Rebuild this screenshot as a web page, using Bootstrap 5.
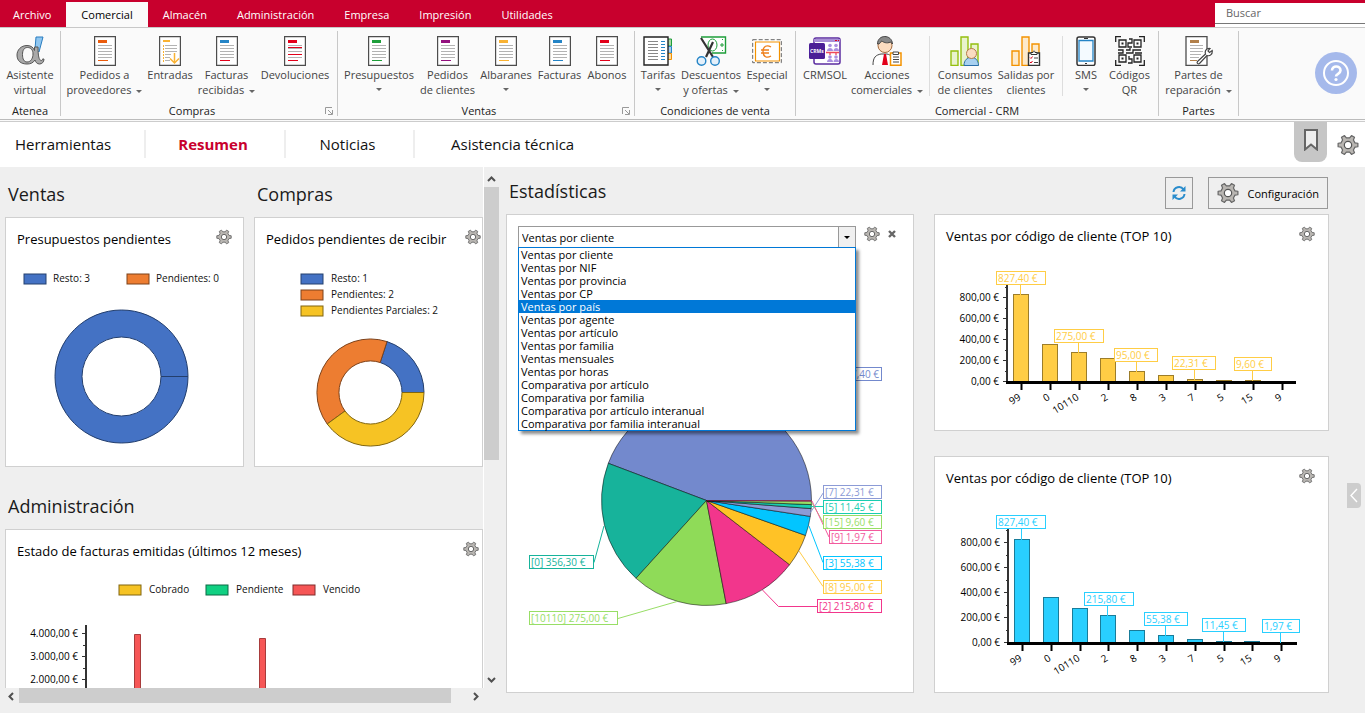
<!DOCTYPE html>
<html lang="es">
<head>
<meta charset="utf-8">
<meta name="viewport" content="width=device-width, initial-scale=1">
<title>Comercial - Resumen</title>
<link href="https://cdn.jsdelivr.net/npm/bootstrap@5.3.0/dist/css/bootstrap.min.css" rel="stylesheet">
<style>
:root{--brand:#c8002d;--rule:#c8c8c8;--ink:#444}
body{font-family:"Open Sans","Noto Sans",sans-serif;font-size:11px;line-height:15px;color:#000;background:#efefef;height:100vh;overflow:hidden}
svg{display:block}
.topbar{background:var(--brand);height:27px}
.topbar .nav-link{color:#fff;padding:0 15px;font-size:11px;line-height:25px;height:25px;border:0;border-radius:0}
.topbar .nav-link:first-child{padding-left:13px}
.topbar .nav-link.active{background:#fafafa;color:#000}
.searchbox{width:150px;margin-top:3px;background:#fff;height:24px}
.searchbox input{width:100%;height:21px;border:0;border-bottom:1px solid #777;padding:0 11px 2px;font-size:11px;border-radius:0;outline:0}
.searchbox input::placeholder{color:#666}
.ribbon{background:#fafafa;border-top:1px solid var(--rule);border-bottom:1px solid #bbb;height:93px}
.ribbon-shade{height:2px;border-bottom:1px solid #ccc;background:#fafafa}
.rgroup{position:relative;border-right:1px solid var(--rule);margin:3px 0;padding-top:5px}
.rgrid{display:grid;height:67px}
.g-atenea{grid-template-columns:60px}
.g-compras{grid-template-columns:87px 44px 69px 68px 8px}
.g-ventas{grid-template-columns:82px 55px 62px 45px 50px 2px}
.g-cond{grid-template-columns:46px 60px 52px 2px}
.g-crm{grid-template-columns:58px 66px 18px 54px 68px 5px 42px 45px 6px}
.g-partes{grid-template-columns:79px}
.rbtn{border:0;background:none;padding:0;color:var(--ink);white-space:nowrap;display:flex;flex-direction:column;align-items:center;overflow:visible;line-height:15px}
.rbtn svg.ico{margin-bottom:1px;flex:none}
.rbtn .caret,.caret{display:inline-block;border:3px solid transparent;border-top-color:#666;border-bottom:0;vertical-align:middle}
.rbtn .caret.ms-cr{margin-left:5px}
.rbtn .lone{margin-top:6px}
.rsep{width:1px;background:#ddd;justify-self:center;height:60px}
.rcap{text-align:center;color:#222;height:15px}
.rcap.with-launcher{padding-right:14px}
.launcher{position:absolute;right:4px;bottom:1px}
.helpbtn{width:42px;height:42px;background:#a5b9eb;border:0;padding:0;border-radius:50%}
.subnav{background:#fff;height:45px}
.subnav a{font-size:15px;color:#111;text-decoration:none;text-align:center;line-height:28px;border-right:2px solid #eee;width:140px;padding-right:4px}
.subnav a.first{width:146px;text-align:left;padding-left:15px}
.subnav a.third{width:129px}
.subnav a.last{border:0;width:auto;padding-left:36px}
.subnav a.active{color:var(--brand);font-weight:700}
.bookmark{width:33px;height:40px;background:#c6c6c6;border:0;border-radius:0 0 8px 8px;padding:0 0 4px}
.iconbtn{border:0;background:none;padding:0;display:block}
.iconbtn.settings{margin:12px 6px 0 10px}
.board{display:grid;grid-template-columns:506fr 408fr 415fr 36px;height:calc(100vh - 167px)}
.pane{padding-right:7px;padding-bottom:9px;min-width:0;min-height:0}
.viewport{overflow:hidden;min-width:0}
.viewport-in{padding-left:5px;border-right:1px solid #fff}
.duo{display:grid;grid-template-columns:239fr 229fr;column-gap:10px}
.sect{font-size:18px;line-height:24px;font-weight:400;margin:0;padding:15px 3px 11px;color:#1a1a1a}
.sect.compact{padding-top:12px}
.sect.next{padding-top:27px}
.panel{background:#fff;border:1px solid #d0d0d0}
.panel-h{padding:11px 11px 0;height:38px;display:flex;align-items:flex-start;justify-content:space-between}
.panel-h h3{font-size:13px;line-height:20px;font-weight:500;margin:0;white-space:nowrap}
.panel-h.flush{padding-right:1px}
.panel-h.near{padding-right:3px}
.top10 .panel-h{padding-right:13px}
.panel-h.combo-row{height:34px;justify-content:flex-start;gap:8px}
.panel svg.plot{width:100%;height:auto}
.vbar{width:15px;background:#efefef}
.vbar i,.hbar i{display:block;background:#cdcdcd}
.vbar i{height:273px}
.hbar{height:16px;margin:0 15px 0 3px}
.vbar button,.hbar button{border:0;background:none;padding:0;width:16px;height:16px;display:flex;align-items:center;justify-content:center}
.vbar button{width:15px}
.hbar i{flex:0 1 432px;height:15px}
.tools{display:flex;justify-content:flex-end;gap:15px;padding:10px 1px 0 0;height:47px}
.toolbtn{border:1px solid #999;background:#efefef;height:32px;padding:0;border-radius:0;font-size:11px;color:#000}
.toolbtn.square{width:28px}
.top10 + .top10{margin-top:25px}
.combo{position:relative;width:338px}
.combo select{appearance:none;width:100%;height:22px;border:1px solid #999;border-radius:0;padding:0 3px;background:#fff;font-size:11px;color:#000;display:block}
.combo .drop{position:absolute;right:0;top:0;width:18px;height:22px;border:1px solid #999;background:#f0f0f0;display:flex;align-items:center;justify-content:center;pointer-events:none}
.combo .drop .caret{border-top-color:#000}
.combo .dropdown-menu{top:21px;left:0;width:100%;padding:0;margin:0;border:1px solid #0078d7;border-radius:0;box-shadow:3px 3px 3px rgba(0,0,0,.45);font-size:11px}
.combo .dropdown-item{padding:0 2px;line-height:13px;color:#000}
.combo .dropdown-item.active{background:#0078d7;color:#fff}
.plot text{font-size:10px}
.plot .lg{fill:#111}
.handle{width:14px;height:25px;border:0;background:#cdcdcd;border-radius:0 4px 4px 0;padding:0;margin:316px 0 0 18px}
</style>
</head>
<body class="d-flex flex-column">
<svg width="0" height="0" class="position-absolute" aria-hidden="true">
<symbol id="gear" viewBox="0 0 24 24"><path d="M19.6 9.7 22.8 10.1V13.9L19.6 14.3 17.9 17.5 19.1 20.4 15.8 22.3 13.8 19.8H10.2L8.2 22.3 4.9 20.4 6.1 17.5 4.4 14.3 1.2 13.9V10.1L4.4 9.7 6.1 6.5 4.9 3.6 8.2 1.7 10.2 4.2H13.8L15.8 1.7 19.1 3.6 17.9 6.5Z" fill="#b9b6b2" stroke="#666" stroke-width="1.3" stroke-linejoin="round"/><circle cx="12" cy="12" r="4" fill="#fff" stroke="#555" stroke-width="1.3"/></symbol>
<symbol id="doc" viewBox="0 0 22 30"><path d="M.5.5h21v29H.5z" fill="#fff" stroke="#4d4d4d" stroke-width="1.4"/><path d="M4 4h9v3H4zM4 24h10v1H4z" fill="currentColor"/><path d="M4 9.5h14M4 12.5h14M4 15.5h14M4 18.5h14M4 21.5h14" stroke="#b3b3b3"/></symbol>
</svg>

<header>
<div class="topbar d-flex justify-content-between">
 <nav class="nav align-items-end flex-nowrap">
  <a class="nav-link" href="#">Archivo</a><a class="nav-link active" href="#">Comercial</a><a class="nav-link" href="#">Almacén</a><a class="nav-link" href="#">Administración</a><a class="nav-link" href="#">Empresa</a><a class="nav-link" href="#">Impresión</a><a class="nav-link" href="#">Utilidades</a>
 </nav>
 <div class="searchbox"><input type="text" placeholder="Buscar" aria-label="Buscar"></div>
</div>

<div class="ribbon d-flex">
 <div class="rgroup"><div class="rgrid g-atenea">
  <button class="rbtn"><svg class="ico" width="30" height="30" viewBox="0 0 30 30"><path d="M21 1h7l-4 15-4-3z" fill="#8fc6f0" stroke="#2a7dc0"/><path d="M19.500 11h3.500c0 9 1 13 3 13.500 1 .2 1.500-.5 1.500-1.500h1.500c0 3-2 5-4.500 5-2.500 0-4-2-4.500-4-2 3-4.500 4-8 4-6 0-10-3-10-9 0-5 4-9.500 10-9.500 4 0 6.500 2 7.500 5z" fill="#a9a9a9" stroke="#555"/><path d="M12.500 11.500c-3.500 0-5 3-5 7 0 4.500 1.500 7.500 4.500 7.500 4 0 6-4 6-8 0-4-2-6.500-5.500-6.500z" fill="#fafafa" stroke="#555"/></svg>Asistente<br>virtual</button>
 </div><div class="rcap">Atenea</div></div>

 <div class="rgroup"><div class="rgrid g-compras">
  <button class="rbtn"><svg class="ico" width="22" height="30" color="#ea5b0c"><use href="#doc"/></svg>Pedidos a<span>proveedores<i class="caret ms-cr"></i></span></button>
  <button class="rbtn"><svg class="ico" width="22" height="30" viewBox="0 0 22 30"><path d="M.5.5h21v29H.5z" fill="#fff" stroke="#4d4d4d" stroke-width="1.400"/><path d="M4 4h7v2H4z" fill="#f9b233"/><path d="M6 9.500h12M6 12.500h12M6 15.500h12M6 18.500h6M6 21.500h5M6 24.500h5" stroke="#b3b3b3"/><path d="M4.500 9v17" stroke="#f9b233" stroke-dasharray="2 1"/><path d="M15.500 17v10M11 22.500l4.500 4.500 4.500-4.500" fill="none" stroke="#f9b233" stroke-width="1.500"/></svg>Entradas</button>
  <button class="rbtn"><svg class="ico" width="22" height="30" viewBox="0 0 22 30"><g color="#2484c6"><use href="#doc"/></g><path d="M4 24h10v1H4z" fill="#e2001a"/></svg>Facturas<span>recibidas<i class="caret ms-cr"></i></span></button>
  <button class="rbtn"><svg class="ico" width="22" height="30" viewBox="0 0 22 30"><g color="#e2001a"><use href="#doc"/></g><path d="M4 11.500h14M4 18.500h14" stroke="#e2001a"/></svg>Devoluciones</button>
 </div><div class="rcap with-launcher">Compras</div><svg class="launcher" width="8" height="8" viewBox="0 0 8 8"><path d="M.5 7V.5H7M3 3l4 4M7.500 3v4.500H3" fill="none" stroke="#999"/></svg></div>

 <div class="rgroup"><div class="rgrid g-ventas">
  <button class="rbtn"><svg class="ico" width="22" height="30" color="#1e9e3a"><use href="#doc"/></svg>Presupuestos<i class="caret lone"></i></button>
  <button class="rbtn"><svg class="ico" width="22" height="30" color="#93117e"><use href="#doc"/></svg>Pedidos<br>de clientes</button>
  <button class="rbtn"><svg class="ico" width="22" height="30" color="#f9b233"><use href="#doc"/></svg>Albaranes<i class="caret lone"></i></button>
  <button class="rbtn"><svg class="ico" width="22" height="30" color="#2484c6"><use href="#doc"/></svg>Facturas</button>
  <button class="rbtn"><svg class="ico" width="22" height="30" color="#e2001a"><use href="#doc"/></svg>Abonos</button>
 </div><div class="rcap with-launcher">Ventas</div><svg class="launcher" width="8" height="8" viewBox="0 0 8 8"><path d="M.5 7V.5H7M3 3l4 4M7.500 3v4.500H3" fill="none" stroke="#999"/></svg></div>

 <div class="rgroup"><div class="rgrid g-cond">
  <button class="rbtn"><svg class="ico" width="30" height="30" viewBox="0 0 30 30"><path d="M24 3h4.500v7H24z" fill="#a8d5a2" stroke="#1e9e3a"/><path d="M24 10.500h4.500v6.500H24z" fill="#a9cdec" stroke="#2484c6"/><path d="M24 17.500h4.500v6H24z" fill="#fbd9a0" stroke="#f39200"/><path d="M1 1h24v28H1z" fill="#fff" stroke="#222" stroke-width="1.400"/><path d="M5 5.500h10M5 8.500h10M5 11.500h10M5 14.500h10M5 17.500h10M5 20.500h10M5 23.500h10" stroke="#888"/><path d="M18 5.500h4M18 8.500h4M18 11.500h4M18 14.500h4M18 17.500h4M18 20.500h4M18 23.500h4" stroke="#2484c6"/></svg>Tarifas<i class="caret lone"></i></button>
  <button class="rbtn"><svg class="ico" width="32" height="30" viewBox="0 0 32 30"><path d="M6 1h24.500v16H17" fill="#fff" stroke="#1e9e3a" stroke-width="1.400"/><ellipse cx="17.500" cy="9" rx="4.500" ry="6" fill="none" stroke="#1e9e3a"/><path d="M25 9h4M27 7v4M27 3.500h1M27 14.500h1" stroke="#1e9e3a"/><path d="M6 2l12 19M18 6L11 21" stroke="#333" stroke-width="2.200"/><circle cx="6.500" cy="25" r="4.300" fill="#e4f0fa" stroke="#2484c6" stroke-width="1.400"/><circle cx="20" cy="25" r="4.300" fill="#e4f0fa" stroke="#2484c6" stroke-width="1.400"/></svg>Descuentos<span>y ofertas<i class="caret ms-cr"></i></span></button>
  <button class="rbtn"><svg class="ico" width="30" height="30" viewBox="0 0 30 30"><path d="M.7 3.700h28.600v23H.7z" fill="#fff" stroke="#666" stroke-dasharray="4 2"/><path d="M3.500 6h24v19h-24z" fill="#fff" stroke="#f39200" stroke-width="1.200"/><path d="M19 11c-4-2.500-8-1-8 4.500s4 7 8 4.500M9 14h8M9 17h8" fill="none" stroke="#ee7f1a" stroke-width="1.300"/></svg>Especial<i class="caret lone"></i></button>
 </div><div class="rcap">Condiciones de venta</div></div>

 <div class="rgroup"><div class="rgrid g-crm">
  <button class="rbtn"><svg class="ico" width="34" height="30" viewBox="0 0 34 30"><rect x="6" y="2" width="26" height="26" rx="2" fill="#fff" stroke="#5b2da0" stroke-width="1.500"/><path d="M6 3h26v3H6z" fill="#a98fd6"/><path d="M27 4.500h2M30 4.500h1" stroke="#e2001a"/><g fill="#a98fe0"><circle cx="22" cy="9.500" r="1.800"/><path d="M19 15c0-4 6-4 6 0z"/><circle cx="28" cy="9.500" r="1.800"/><path d="M25.500 15c0-4 5.500-4 5.500 0z"/><circle cx="22" cy="21" r="1.800"/><path d="M19 26c0-4 6-4 6 0z"/><circle cx="28" cy="21" r="1.800"/><path d="M25.500 26c0-4 5.500-4 5.500 0z"/></g><path d="M18 16.500h13M22 16v3M28 16v3" stroke="#ee4a5a" stroke-width="1.300"/><rect x="1" y="7" width="16" height="16" rx="1.500" fill="#4b1e96"/><text x="2" y="17" font-size="5" font-weight="700" fill="#fff">CRMs</text></svg>CRMSOL</button>
  <button class="rbtn"><svg class="ico" width="30" height="30" viewBox="0 0 30 30"><path d="M1 29c0-8 3-10 8-11h6c4 1 7 3 8 11" fill="#fff" stroke="#444"/><path d="M12 18h2l2 11h-6z" fill="#e2001a"/><circle cx="13" cy="9.500" r="7" fill="#fbdcc0" stroke="#a56a3c"/><path d="M5.500 8C5.500-2 20-2 20.500 8l-2-2c-4 2-7 0-9-1-1 2-2 3-4 3z" fill="#888" stroke="#444"/><path d="M18.500 17h10.500v12.300h-10.500z" fill="#fff" stroke="#f39200" stroke-width="1.500"/><path d="M21 16h5.500v2.500H21zM21 21h6M21 23.500h6M21 26h6" fill="#fff" stroke="#444"/></svg>Acciones<span>comerciales<i class="caret ms-cr"></i></span></button>
  <span class="rsep"></span>
  <button class="rbtn"><svg class="ico" width="30" height="30" viewBox="0 0 30 30"><path d="M1 15h7v14.500H1zM11 1h7v28.500h-7zM21 8h7v21h-7z" fill="#e9f3cd" stroke="#94bf0e" stroke-width="1.400"/><path d="M14 29.500c0-11 14.500-11 14.500 0z" fill="#a7d0f0" stroke="#2a6ea8"/><circle cx="21.500" cy="17.500" r="5" fill="#fbdcc0" stroke="#b5784a"/></svg>Consumos<br>de clientes</button>
  <button class="rbtn"><svg class="ico" width="30" height="30" viewBox="0 0 30 30"><path d="M1 15h7v14.500H1zM11 1h7v28.500h-7zM21 8h7v21h-7z" fill="#fdeacb" stroke="#f39200" stroke-width="1.400"/><path d="M17.500 17h11v12.500h-11z" fill="#fff" stroke="#333" stroke-width="1.400"/><path d="M20 18.500v-2h2c0-2 2-2 2 0h2v2z" fill="#fff" stroke="#333"/><path d="M19 21.500l1 1 1.500-2M19 26l1 1 1.500-2" stroke="#e2001a" fill="none"/><path d="M23 22h4M23 26.500h4" stroke="#444"/></svg>Salidas por<br>clientes</button>
  <span class="rsep"></span>
  <button class="rbtn"><svg class="ico" width="20" height="30" viewBox="0 0 20 30"><rect x="1" y="1" width="18" height="28.500" rx="2" fill="#fff" stroke="#333" stroke-width="1.500"/><path d="M3 4.500h14v20.500H3z" fill="#f4faff" stroke="#2484c6" stroke-width="1.300"/><path d="M8 2.500h4M9 27.500h2" stroke="#333"/></svg>SMS<i class="caret lone"></i></button>
  <button class="rbtn"><svg class="ico" width="30" height="30" viewBox="0 0 30 30"><g fill="none" stroke="#222" stroke-width="1.300"><path d="M.7 6V.7H6M24 .7h5.300V6M29.300 24v5.300H24M6 29.300H.7V24M4 4h7v7H4zM19 4h7v7h-7zM4 19h7v7H4zM19 19h7v7h-7z"/><path d="M14 3h3v4h-4v4h4M3 14h5v3H3M11 14h4v-2M11 17h7v-3h8M20 17h7M14 20v3h3v4h-4M13 27h4"/></g><path d="M6.500 6.500h2v2h-2zM21.500 6.500h2v2h-2zM6.500 21.500h2v2h-2zM21.500 21.500h2v2h-2z" fill="#222"/></svg>Códigos<br>QR</button>
 </div><div class="rcap">Comercial - CRM</div></div>

 <div class="rgroup"><div class="rgrid g-partes">
  <button class="rbtn"><svg class="ico" width="28" height="30" viewBox="0 0 28 30"><g color="#b17f4a"><path d="M1 .7h21v28.600H1z" fill="#fff" stroke="#4d4d4d" stroke-width="1.300"/><path d="M5 4h9v3H5zM5 24h7v1H5z" fill="currentColor"/></g><path d="M5 9.500h13M5 12.500h13M5 15.500h13M5 18.500h11M5 21.500h9" stroke="#b3b3b3"/><path d="M12.500 25.500l8-7.500c-1-3 1-6 4.500-5.500l-2 2.500 1.500 1.500 2.700-2c.5 3.500-2 6-5.200 5l-7.500 8c-1.500 1-3-.5-2-2z" fill="#fff" stroke="#444" stroke-width="1.200"/></svg>Partes de<span>reparación<i class="caret ms-cr"></i></span></button>
 </div><div class="rcap">Partes</div></div>
 <div class="ms-auto pe-2 d-flex align-items-start pt-4"><button class="helpbtn" aria-label="Ayuda"><svg width="42" height="42" viewBox="0 0 42 42"><circle cx="21" cy="21" r="12" fill="none" stroke="#fff" stroke-width="2"/><path d="M17 18.500c0-5.500 8.500-5 8.500 0 0 3.500-4.500 3-4.500 6" fill="none" stroke="#fff" stroke-width="2.600"/><circle cx="21" cy="27.500" r="1.600" fill="#fff"/></svg></button></div>
</div>
<div class="ribbon-shade"></div>

<div class="subnav d-flex align-items-start">
 <nav class="d-flex pt-2"><a class="first" href="#">Herramientas</a><a class="active" href="#">Resumen</a><a class="third" href="#">Noticias</a><a class="last" href="#">Asistencia técnica</a></nav>
 <button class="bookmark ms-auto" aria-label="Marcador"><svg class="mx-auto" width="14" height="22" viewBox="0 0 14 22"><path d="M1 1h12v19.500l-6-5-6 5z" fill="#eee" stroke="#666" stroke-width="2"/></svg></button>
 <button class="iconbtn settings" aria-label="Ajustes"><svg width="22" height="22"><use href="#gear"/></svg></button>
</div>
</header>

<main class="board">
 <section class="pane d-flex flex-column">
  <div class="d-flex flex-grow-1 overflow-hidden">
   <div class="viewport flex-grow-1"><div class="viewport-in">
    <div class="duo">
     <div>
      <h2 class="sect">Ventas</h2>
      <div class="panel"><div class="panel-h"><h3>Presupuestos pendientes</h3><button class="iconbtn" aria-label="Configurar"><svg width="16" height="16"><use href="#gear"/></svg></button></div>
       <svg class="plot" viewBox="6 256 237 210">
        <rect x="24" y="274" width="22" height="10" fill="#4472c4" stroke="#24406f"/><text class="lg" x="53" y="282">Resto: 3</text>
        <rect x="127" y="274" width="22" height="10" fill="#ed7d31" stroke="#7d421a"/><text class="lg" x="156" y="282">Pendientes: 0</text>
        <circle cx="121.500" cy="376.500" r="53" fill="none" stroke="#4472c4" stroke-width="27"/>
        <g fill="none" stroke="#243f6d"><circle cx="121.500" cy="376.500" r="66.500"/><circle cx="121.500" cy="376.500" r="39.500"/><path d="M161 376.500h27"/></g>
       </svg></div>
     </div>
     <div>
      <h2 class="sect">Compras</h2>
      <div class="panel"><div class="panel-h flush"><h3>Pedidos pendientes de recibir</h3><button class="iconbtn" aria-label="Configurar"><svg width="16" height="16"><use href="#gear"/></svg></button></div>
       <svg class="plot" viewBox="255 256 227 210">
        <rect x="301" y="274" width="22" height="10" fill="#4472c4" stroke="#24406f"/><text class="lg" x="331" y="282">Resto: 1</text>
        <rect x="301" y="290" width="22" height="10" fill="#ed7d31" stroke="#7d421a"/><text class="lg" x="331" y="298">Pendientes: 2</text>
        <rect x="301" y="306" width="22" height="10" fill="#f6c324" stroke="#80650f"/><text class="lg" x="331" y="314">Pendientes Parciales: 2</text>
        <path d="M424 392.500A53.500 53.500 0 0 0 387 341.600L380.200 362.500A31.500 31.500 0 0 1 402 392.500Z" fill="#4472c4" stroke="#243f6d"/>
        <path d="M387 341.600A53.500 53.500 0 0 0 327.200 424L345 411A31.500 31.500 0 0 1 380.200 362.500Z" fill="#ed7d31" stroke="#7d421a"/>
        <path d="M424 392.500A53.500 53.500 0 0 1 327.200 424L345 411A31.500 31.500 0 0 0 402 392.500Z" fill="#f6c324" stroke="#80650f"/>
       </svg></div>
     </div>
    </div>
    <h2 class="sect next">Administración</h2>
    <div class="panel border-bottom-0"><div class="panel-h near"><h3>Estado de facturas emitidas (últimos 12 meses)</h3><button class="iconbtn" aria-label="Configurar"><svg width="16" height="16"><use href="#gear"/></svg></button></div>
     <svg class="plot" viewBox="6 568 476 121">
      <rect x="119" y="585" width="22" height="10" fill="#f6c324" stroke="#80650f"/><text class="lg" x="149" y="593">Cobrado</text>
      <rect x="206" y="585" width="22" height="10" fill="#10d082" stroke="#0b6b44"/><text class="lg" x="236" y="593">Pendiente</text>
      <rect x="293" y="585" width="22" height="10" fill="#f65656" stroke="#802d2d"/><text class="lg" x="323" y="593">Vencido</text>
      <g text-anchor="end"><text x="78" y="637">4.000,00 €</text><text x="78" y="660">3.000,00 €</text><text x="78" y="683">2.000,00 €</text></g>
      <path d="M86 625v64" stroke="#333" stroke-width="2"/><path d="M82 633.500h4M83 645.500h3M82 656.500h4M83 668.500h3M82 679.500h4" stroke="#333"/>
      <path d="M134.500 700v-65.500h6v65.500zM259.500 700v-61.500h6v61.500z" fill="#f65656" stroke="#a83b3b"/>
     </svg></div>
   </div></div>
   <div class="vbar d-flex flex-column pt-1"><button aria-label="Subir"><svg width="9" height="6" viewBox="0 0 9 6"><path d="M1 5l3.500-3.500L8 5" fill="none" stroke="#505050" stroke-width="2"/></svg></button><i></i><button class="mt-auto" aria-label="Bajar"><svg width="9" height="6" viewBox="0 0 9 6"><path d="M1 1l3.500 3.500L8 1" fill="none" stroke="#505050" stroke-width="2"/></svg></button></div>
  </div>
  <div class="hbar d-flex"><button aria-label="Izquierda"><svg width="6" height="9" viewBox="0 0 6 9"><path d="M5 1L1.500 4.500 5 8" fill="none" stroke="#505050" stroke-width="2"/></svg></button><i></i><button class="ms-auto" aria-label="Derecha"><svg width="6" height="9" viewBox="0 0 6 9"><path d="M1 1l3.500 3.500L1 8" fill="none" stroke="#505050" stroke-width="2"/></svg></button></div>
 </section>

 <section>
  <h2 class="sect compact">Estadísticas</h2>
  <div class="panel">
   <div class="panel-h combo-row"><div class="combo">
     <select aria-label="Estadística"><option>Ventas por cliente</option></select><span class="drop"><i class="caret"></i></span>
     <div class="dropdown-menu show">
      <a class="dropdown-item" href="#">Ventas por cliente</a><a class="dropdown-item" href="#">Ventas por NIF</a><a class="dropdown-item" href="#">Ventas por provincia</a><a class="dropdown-item" href="#">Ventas por CP</a><a class="dropdown-item active" href="#">Ventas por país</a><a class="dropdown-item" href="#">Ventas por agente</a><a class="dropdown-item" href="#">Ventas por artículo</a><a class="dropdown-item" href="#">Ventas por familia</a><a class="dropdown-item" href="#">Ventas mensuales</a><a class="dropdown-item" href="#">Ventas por horas</a><a class="dropdown-item" href="#">Comparativa por artículo</a><a class="dropdown-item" href="#">Comparativa por familia</a><a class="dropdown-item" href="#">Comparativa por artículo interanual</a><a class="dropdown-item" href="#">Comparativa por familia interanual</a>
     </div></div>
    <button class="iconbtn" aria-label="Configurar"><svg width="16" height="16"><use href="#gear"/></svg></button>
    <button class="iconbtn py-1" aria-label="Cerrar"><svg width="8" height="8" viewBox="0 0 8 8"><path d="M1 1l6 6M7 1L1 7" stroke="#666" stroke-width="2.400"/></svg></button>
   </div>
   <svg class="plot" viewBox="507 249 406 443">
    <g stroke="#000" stroke-opacity=".5" stroke-linejoin="round">
     <path d="M706.500 500.500L608.300 463.300A105 105 0 0 1 811.500 500.500Z" fill="#7389cd"/>
     <path d="M706.500 500.500L636 578.300A105 105 0 0 1 608.300 463.300Z" fill="#17b39b"/>
     <path d="M706.500 500.500L726.200 603.600A105 105 0 0 1 636 578.300Z" fill="#8fdb58"/>
     <path d="M706.500 500.500L789.600 564.700A105 105 0 0 1 726.200 603.600Z" fill="#f2368c"/>
     <path d="M706.500 500.500L805.500 535.400A105 105 0 0 1 789.600 564.700Z" fill="#ffc226"/>
     <path d="M706.500 500.500L810.300 516.400A105 105 0 0 1 805.500 535.400Z" fill="#02c5ff"/>
     <path d="M706.500 500.500L811.200 508.600A105 105 0 0 1 810.300 516.400Z" fill="#8c9bd6"/>
     <path d="M706.500 500.500L811.400 504.600A105 105 0 0 1 811.200 508.600Z" fill="#19cdb0"/>
     <path d="M706.500 500.500L811.500 501.200A105 105 0 0 1 811.400 504.600Z" fill="#98de66"/>
     <path d="M706.500 500.500H811.500V501.200Z" fill="#f2368c" stroke="#80204c"/>
    </g>
    <g fill="none">
     <path d="M823.500 492.500l-13 20" stroke="#8c9bd6"/><path d="M811 506.500h12" stroke="#19cdb0"/><path d="M812 503l11 19" stroke="#98de66"/><path d="M812 501l17 36" stroke="#f25a9e"/><path d="M809 526l14 36.500" stroke="#02c5ff"/><path d="M799 551l24 35.500" stroke="#ffcb45"/><path d="M762.500 590l16 16.500h39" stroke="#f2368c"/><path d="M677 601.500l-59 17" stroke="#98de66"/><path d="M604 526l-10 36.500" stroke="#17b39b"/>
    </g>
    <g id="pieTags"></g>
   </svg>
  </div>
 </section>

 <section class="ps-3"><div class="ps-1">
  <div class="tools"><button class="toolbtn square" aria-label="Actualizar"><svg class="mx-auto" width="14" height="14" viewBox="0 0 14 14"><path d="M1.500 6A5.500 5.500 0 0 1 11.500 3.500M12.500 8A5.500 5.500 0 0 1 2.500 10.500" fill="none" stroke="#2a8ccc" stroke-width="2"/><path d="M13.500 0v5.500H8zM.5 14V8.500H6z" fill="#2a8ccc"/></svg></button>
  <button class="toolbtn d-flex align-items-center px-2"><svg width="22" height="22" class="me-2 ms-n1"><use href="#gear"/></svg>Configuración</button></div>
  <div class="panel top10"><div class="panel-h"><h3>Ventas por código de cliente (TOP 10)</h3><button class="iconbtn" aria-label="Configurar"><svg width="16" height="16"><use href="#gear"/></svg></button></div>
   <svg class="plot" id="top1" viewBox="935 253 393 177"></svg></div>
  <div class="panel top10"><div class="panel-h"><h3>Ventas por código de cliente (TOP 10)</h3><button class="iconbtn" aria-label="Configurar"><svg width="16" height="16"><use href="#gear"/></svg></button></div>
   <svg class="plot" id="top2" viewBox="935 495 393 197"></svg></div>
 </div></section>
 <div><button class="handle" aria-label="Abrir panel"><svg width="14" height="25" viewBox="0 0 14 25"><path d="M10 6L4 12.500 10 19" fill="none" stroke="#fff" stroke-width="1.400"/></svg></button></div>
</main>
<script src="https://cdn.jsdelivr.net/npm/bootstrap@5.3.0/dist/js/bootstrap.bundle.min.js"></script>
<script>
// Boxed value label
function tag(x, y, w, text, color){
  return `<rect x="${x+.5}" y="${y+.5}" width="${w-1}" height="13" fill="#fff" stroke="${color}"/><text x="${x+2}" y="${y+11}" fill="${color}">${text}</text>`;
}
document.getElementById('pieTags').innerHTML = [
  [817,367,65,'[99] 827,40 €','#7389cd'],[823,485,59,'[7] 22,31 €','#8c9bd6'],[823,500,59,'[5] 11,45 €','#19cdb0'],
  [823,515,59,'[15] 9,60 €','#98de66'],[829,530,53,'[9] 1,97 €','#f25a9e'],[823,556,59,'[3] 55,38 €','#02c5ff'],
  [823,580,59,'[8] 95,00 €','#ffcb45'],[817,599,65,'[2] 215,80 €','#f2368c'],[529,555,65,'[0] 356,30 €','#17b39b'],
  [529,611,89,'[10110] 275,00 €','#98de66']].map(t => tag(...t)).join('');

// Bar chart of the ten best customers
function bars(id, o){
  const codes = ['99','0','10110','2','8','3','7','5','15','9'];
  const values = [827.4,356.3,275,215.8,95,55.38,22.31,11.45,9.6,1.97];
  let s = `<path d="M${o.x} ${o.top}V${o.base}" stroke="#333" stroke-width="2"/>`;
  for (let v = 0; v <= 900; v += 100){
    const y = Math.round(o.base - v*o.k) - .5, major = v % 200 === 0;
    s += `<path d="M${o.x-(major?4:2)} ${y}H${o.x}" stroke="#333"/>`;
    if (major) s += `<text x="${o.x-8}" y="${y+3}" text-anchor="end">${v},00 €</text>`;
  }
  values.forEach((v, i) => {
    const x = Math.round(o.x + 6 + i*o.step) + .5, h = Math.round(v*o.k);
    s += `<rect x="${x}" y="${o.base-h-.5}" width="15" height="${h}" fill="${o.fill}" stroke="${o.line}"/>`;
    s += `<path d="M${x+8} ${o.base}v8" stroke="#000" stroke-width="2"/>`;
    s += `<text transform="translate(${x+8} ${o.base+17}) rotate(-32)" text-anchor="end">${codes[i]}</text>`;
  });
  s += `<path d="M${o.x-1} ${o.base+.5}H${o.x+289}" stroke="#000" stroke-width="3"/>`;
  o.tags.forEach(([i, x, y, w, t]) => {
    const cx = Math.round(o.x + 13 + i*o.step) + .5;
    s += `<path d="M${cx} ${y+14}V${o.base - Math.round(values[i]*o.k)}" stroke="${o.fill}"/>` + tag(x, y, w, t, o.fill);
  });
  document.getElementById(id).innerHTML = s;
}
bars('top1', {x:1007, top:285, base:382, k:.105, step:29, fill:'#ffcd45', line:'#9c7d2a',
  tags:[[0,996,271,50,'827,40 €'],[2,1054,329,50,'275,00 €'],[4,1114,348,44,'95,00 €'],[6,1172,356,44,'22,31 €'],[8,1234,357,38,'9,60 €']]});
bars('top2', {x:1008, top:529, base:643, k:.125, step:28.8, fill:'#29cfff', line:'#197c99',
  tags:[[0,996,515,50,'827,40 €'],[3,1084,592,50,'215,80 €'],[5,1144,612,44,'55,38 €'],[7,1202,618,44,'11,45 €'],[9,1262,619,38,'1,97 €']]});
</script>
</body>
</html>
